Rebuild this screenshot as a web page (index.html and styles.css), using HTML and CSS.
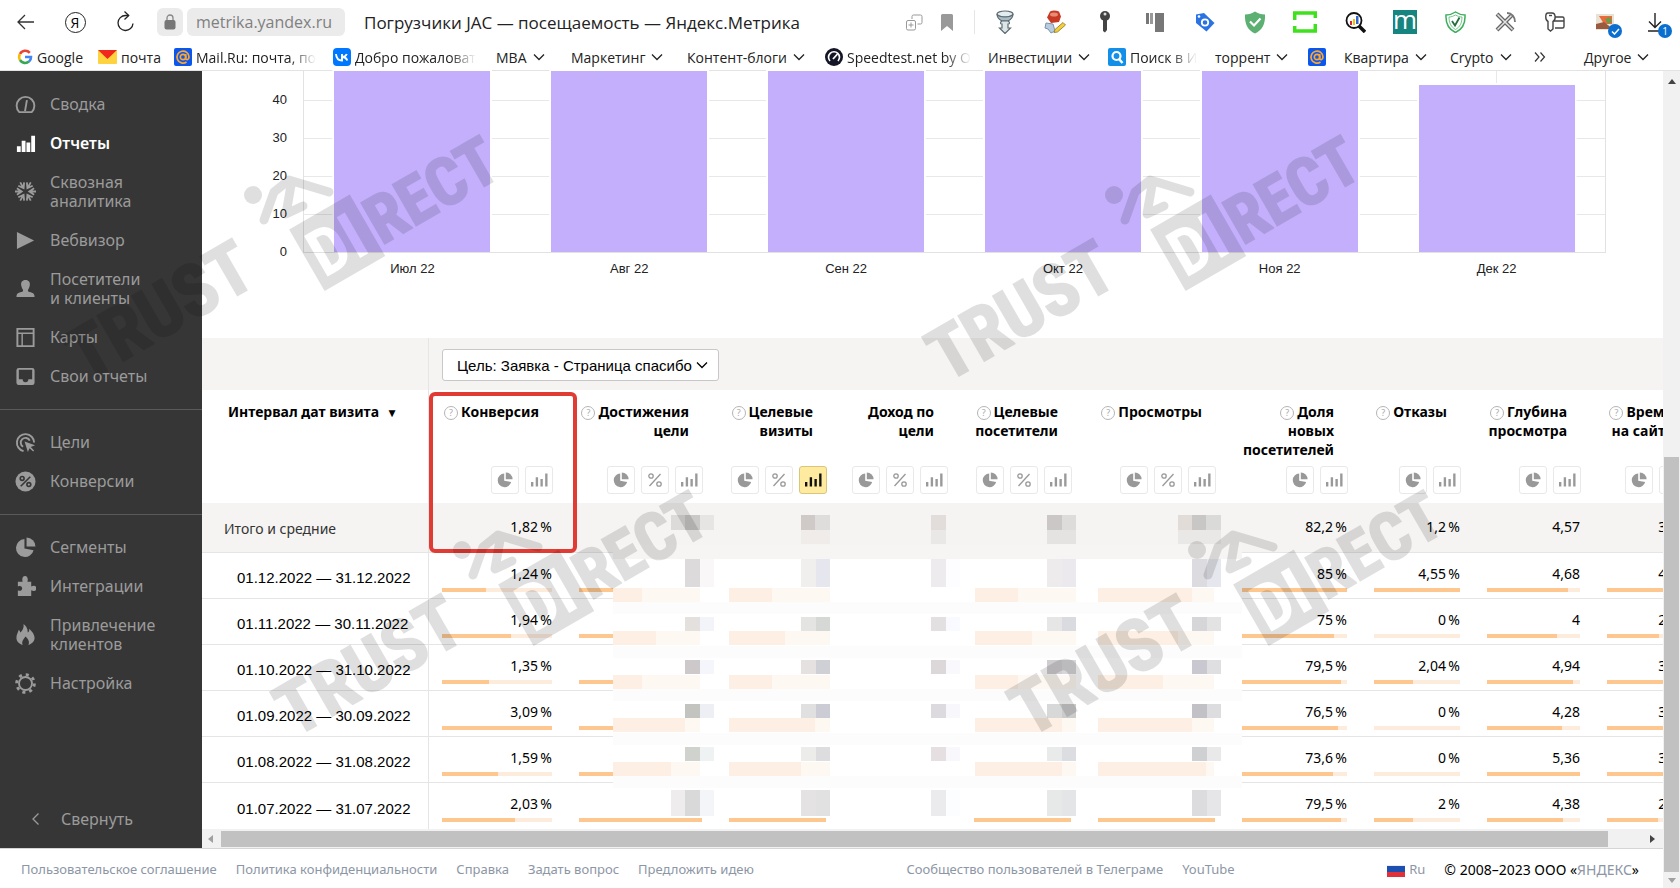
FILE: index.html
```html
<!DOCTYPE html>
<html lang="ru">
<head>
  <meta charset="UTF-8">
  <title>Погрузчики JAC — посещаемость — Яндекс.Метрика</title>
  <meta name="viewport" content="width=device-width, initial-scale=1.0">
  <link rel="stylesheet" href="styles.css">
</head>
<body>
  <!-- Shared icons -->
  <svg width="0" height="0" class="sprite" aria-hidden="true">
    <symbol id="i-chevron" viewBox="0 0 12 8"><path d="M1 1.5l5 5 5-5" fill="none" stroke="currentColor" stroke-width="1.3"/></symbol>
    <symbol id="i-pie" viewBox="0 0 20 20"><path d="M9 2a8.500 8.500 0 1 0 8.700 10.500L9 11z"/><path d="M11 0.500v8.500h8.500A8.500 8.500 0 0 0 11 .5z"/></symbol>
    <symbol id="i-bars" viewBox="0 0 18 14"><path d="M0 9h2.500v5H0zM5 4h2.500v10H5zM10 6h2.500v8H10zM15 0h2.500v14H15z"/></symbol>
    <symbol id="i-percent" viewBox="0 0 14 14"><g fill="none" stroke="currentColor" stroke-width="1.300"><circle cx="3" cy="3" r="2.200"/><circle cx="11" cy="11" r="2.200"/><path d="M12.500 1L1.500 13"/></g></symbol>
    <symbol id="i-at" viewBox="0 0 18 18"><rect width="18" height="18" rx="2" fill="#0a57f0"/><g fill="none" stroke="#ffa62b" stroke-width="1.700"><circle cx="9" cy="9" r="2.700"/><path d="M11.700 6v4c0 2.500 3.300 2 3.300-1a6 6 0 1 0-2.500 5"/></g></symbol>
  </svg>

  <header class="browser">
    <div class="toolbar">
      <button class="nav-btn" aria-label="Назад"><svg width="17" height="16" viewBox="0 0 17 16" fill="none" stroke="#333" stroke-width="1.300"><path d="M17 8H1M8 1L1 8l7 7"/></svg></button>
      <button class="nav-btn" aria-label="Яндекс"><span class="ya">Я</span></button>
      <button class="nav-btn" aria-label="Обновить"><svg width="18" height="22" viewBox="0 0 18 22" fill="none" stroke="#222" stroke-width="1.300"><path d="M12.500 4.500H9.500a7.500 7.500 0 1 0 7.500 8"/><path d="M8.500 .5l4.200 4-4.200 4"/></svg></button>
      <span class="lock"><svg width="12" height="16" viewBox="0 0 12 16"><path d="M3 7V4a3 3 0 0 1 6 0v3" fill="none" stroke="#888" stroke-width="1.300"/><rect x="0.500" y="6" width="11" height="9.500" rx="2" fill="#777"/></svg></span>
      <span class="host">metrika.yandex.ru</span>
      <span class="page-title">Погрузчики JAC — посещаемость — Яндекс.Метрика</span>
      <div class="page-actions">
        <svg width="17" height="17" viewBox="0 0 17 17" fill="none" stroke="#999"><path d="M6 5V2.500A1.500 1.500 0 0 1 7.500 1H14.500A1.500 1.500 0 0 1 16 2.500V8.500A1.500 1.500 0 0 1 14.500 10H11.500"/><rect x=".5" y="6.500" width="9" height="9.500" rx="1.500"/><path d="M5 8.500v5M2.500 11h5"/></svg>
        <svg width="12" height="17" viewBox="0 0 12 17" fill="#999"><path d="M1.500 0h9A1.500 1.500 0 0 1 12 1.500V17l-6-5-6 5V1.500A1.500 1.500 0 0 1 1.500 0z"/></svg>
      </div>
      <div class="extensions">
        <span><svg width="18" height="24" viewBox="0 0 18 24" stroke="#5d6b73" stroke-width="1.200"><ellipse cx="9" cy="4" rx="8" ry="3" fill="#e3edf0"/><path d="M1 4c0 4 3 6 5 7h6c2-1 5-3 5-7-2 4-14 4-16 0z" fill="#a9bcc4"/><path d="M6 11c-2 1-2 3 0 3v4H3.500L9 23.500 14.500 18H12v-4c2 0 2-2 0-3z" fill="#dde5e8"/></svg></span>
        <span><svg width="22" height="24" viewBox="0 0 22 24"><path d="M2 13l7 1 2 7-4 2-3-4-3-1z" fill="#b8cce0" stroke="#7c92aa"/><path d="M6 1.500c3-1.500 6-1 9 0l2 5-2 5.500-8 1-4-5.500z" fill="#c83a24"/><ellipse cx="10" cy="4.500" rx="4" ry="2" fill="#e98c75"/><path d="M10 22.500l1-3 8-7 2.500 2.500-8 7z" fill="#f3cf3c" stroke="#8b7525" stroke-width=".8"/></svg></span>
        <span><svg width="12" height="22" viewBox="0 0 12 22"><circle cx="6" cy="5" r="5" fill="#444"/><path d="M4 8h4v11l-2 2.500L4 20z" fill="#444"/><circle cx="6" cy="3" r="1.500" fill="#ddd"/></svg></span>
        <span><svg width="18" height="19" viewBox="0 0 18 19" fill="#777"><rect width="3" height="11"/><rect x="4" width="3" height="11" fill="#999"/><rect x="9" width="9" height="19"/></svg></span>
        <span><svg width="20" height="20" viewBox="0 0 20 20"><path d="M1 2.500L9 1l10.500 10-8 8.500L1 11z" fill="#2b73e3"/><circle cx="4" cy="4.500" r="1.300" fill="#fff"/><circle cx="10" cy="10.500" r="3.200" fill="none" stroke="#fff" stroke-width="1.800"/></svg></span>
        <span><svg width="22" height="23" viewBox="0 0 22 23"><path d="M11 .5c3 2 6 3 10 3C21.500 13 18 19.500 11 22.500 4 19.500.5 13 1 3.500c4 0 7-1 10-3z" fill="#5bb072"/><path d="M6 10.500l4 4 6.500-7" fill="none" stroke="#fff" stroke-width="2.200"/></svg></span>
        <span><svg width="24" height="22" viewBox="0 0 24 22" fill="none" stroke="#3fe01c" stroke-width="3.500"><path d="M1.700 9V2h20.600v5M22.300 13v7H1.700v-5"/></svg></span>
        <span><svg width="21" height="21" viewBox="0 0 21 21"><path d="M14 14l6 6" stroke="#111" stroke-width="3.500"/><circle cx="9" cy="8.500" r="7.500" fill="#fff" stroke="#111" stroke-width="1.800"/><path d="M5 9h2v4H5z" fill="#d23"/><path d="M8 7h2v6H8z" fill="#fb0"/><path d="M11 4h2.500v8H11z" fill="#36c"/></svg></span>
        <span class="ext-m">m</span>
        <span><svg width="21" height="22" viewBox="0 0 21 22" fill="none" stroke="#3eae5c"><path d="M10.500 1c3 2 6 3 9.500 3 .5 9-3 14.500-9.500 17.500C4 18.500.5 13 1 4c3.500 0 6.500-1 9.500-3z" stroke-width="1.500"/><path d="M10.500 4c2 1 4 2 6.500 2 0 6-2 10-6.500 12.500C6 16 4 12 4 6c2.500 0 4.500-1 6.500-2z" stroke-width=".7"/><path d="M7 10l3 4.500 4.500-8" stroke="#256d3c" stroke-width="1.800"/></svg></span>
        <span><svg width="21" height="20" viewBox="0 0 21 20" fill="none"><path d="M2 18L17 3M2 2l16 16" stroke="#666" stroke-width="4"/><path d="M2.500 17.500L17 3M2.500 2.500L17.500 17.500" stroke="#e4e4e4" stroke-width="1.500"/><path d="M12 1c5 0 8 4 8 9" stroke="#777" stroke-width="1.800"/></svg></span>
        <span><svg width="20" height="20" viewBox="0 0 20 20" fill="none" stroke="#444" stroke-width="1.400"><path d="M3 9.500C0 8 0 1 3 1h4c4 0 4 7 1 8.500V17l-2.500 2L3 17z"/><path d="M10 5h7.500A1.500 1.500 0 0 1 19 6.500v8A1.500 1.500 0 0 1 17.500 16H10M9 9h10"/><path d="M4 3.500h3"/></svg></span>
        <span class="badged"><svg width="18" height="16" viewBox="0 0 18 16"><rect width="18" height="16" fill="#e8e2d4"/><path d="M3 2h13v8H8z" fill="#ea6a3c"/><path d="M9 5l5-2 2 5-4 2z" fill="#6a9c4c"/><path d="M0 10l8-2 9 7H0z" fill="#9a5a40"/></svg><i class="badge"><svg width="9" height="7" viewBox="0 0 9 7"><path d="M1 3.500L3.500 6 8 1" fill="none" stroke="#fff" stroke-width="1.500"/></svg></i></span>
        <span class="badged"><svg width="17" height="19" viewBox="0 0 17 19" fill="none" stroke="#222" stroke-width="1.400"><path d="M8 0v14M2 8.500l6 6 6-6M1 18h12"/></svg><i class="badge">1</i></span>
      </div>
    </div>
    <nav class="bookmarks">
      <a href="#"><svg width="16" height="16" viewBox="0 0 16 16" fill="none" stroke-width="2.600"><path d="M12.800 3.800A6 6 0 0 0 3 5" stroke="#ea4335"/><path d="M3 5a6 6 0 0 0 0 6" stroke="#fbbc05"/><path d="M3 11a6 6 0 0 0 9 1.600" stroke="#34a853"/><path d="M12 12.600A6 6 0 0 0 14 8H8" stroke="#4285f4"/></svg><span>Google</span></a>
      <a href="#"><svg width="19" height="14" viewBox="0 0 19 14"><rect width="19" height="14" rx="1" fill="#ffd23f"/><path d="M0 0h19L9.500 9z" fill="#f0271c"/></svg><span>почта</span></a>
      <a href="#" class="long"><svg width="18" height="18"><use href="#i-at"/></svg><span>Mail.Ru: почта, по</span></a>
      <a href="#" class="long"><svg width="18" height="18" viewBox="0 0 18 18"><rect width="18" height="18" rx="4" fill="#07f"/><path d="M3 6c.3 4 2.500 6.500 6 6.500V6M9 9c2 0 4-1 4.800-3M9.500 9c2.500 0 4 1.500 4.800 3.500" fill="none" stroke="#fff" stroke-width="1.900"/></svg><span>Добро пожаловат</span></a>
      <a href="#"><span>MBA</span><svg class="chev"><use href="#i-chevron"/></svg></a>
      <a href="#"><span>Маркетинг</span><svg class="chev"><use href="#i-chevron"/></svg></a>
      <a href="#"><span>Контент-блоги</span><svg class="chev"><use href="#i-chevron"/></svg></a>
      <a href="#" class="long"><svg width="18" height="18" viewBox="0 0 18 18"><circle cx="9" cy="9" r="9" fill="#141526"/><path d="M5 13a5.500 5.500 0 1 1 8 0" fill="none" stroke="#fff" stroke-width="1.700"/><path d="M8 11l4.500-5" stroke="#fff" stroke-width="1.800"/></svg><span>Speedtest.net by O</span></a>
      <a href="#"><span>Инвестиции</span><svg class="chev"><use href="#i-chevron"/></svg></a>
      <a href="#" class="long"><svg width="18" height="18" viewBox="0 0 18 18"><rect width="18" height="18" rx="2" fill="#128fe8"/><circle cx="8.500" cy="8" r="4" fill="none" stroke="#fff" stroke-width="2.200"/><path d="M11 11l3.500 4" stroke="#fff" stroke-width="2.500"/></svg><span>Поиск в И</span></a>
      <a href="#"><span>торрент</span><svg class="chev"><use href="#i-chevron"/></svg></a>
      <a href="#" aria-label="Mail.Ru"><svg width="18" height="18"><use href="#i-at"/></svg></a>
      <a href="#"><span>Квартира</span><svg class="chev"><use href="#i-chevron"/></svg></a>
      <a href="#"><span>Crypto</span><svg class="chev"><use href="#i-chevron"/></svg></a>
      <a href="#" aria-label="Ещё"><svg width="12" height="10" viewBox="0 0 12 10" fill="none" stroke="#333" stroke-width="1.200"><path d="M1 .5L5 5 1 9.500M6.500.5l4 4.500-4 4.500"/></svg></a>
      <a href="#"><span>Другое</span><svg class="chev"><use href="#i-chevron"/></svg></a>
    </nav>
  </header>

  <div class="viewport">
    <div class="page">
      <div class="layout">
        <aside class="sidebar">
          <ul class="menu">
            <li><a href="#"><svg viewBox="0 0 22 22" fill="none" stroke="currentColor" stroke-width="2"><path d="M4.500 19a9.300 9.300 0 1 1 13 0z"/><path d="M12.500 6.500L10.500 18" stroke-width="2"/></svg>Сводка</a></li>
            <li><a href="#" class="active"><svg viewBox="0 0 22 22"><path d="M2 14h4v6H2zM7 8h4v12H7zM12 10h4v10h-4zM17 3h4v17h-4z"/></svg>Отчеты</a></li>
            <li><a href="#"><svg viewBox="0 0 22 22" fill="none" stroke="currentColor" stroke-width="1.900"><g id="ray"><path d="M0 11h7M2 7.500L7 11l-5 3.500"/></g><use href="#ray" transform="rotate(60 11 11)"/><use href="#ray" transform="rotate(120 11 11)"/><use href="#ray" transform="rotate(180 11 11)"/><use href="#ray" transform="rotate(240 11 11)"/><use href="#ray" transform="rotate(300 11 11)"/></svg>Сквозная<br>аналитика</a></li>
            <li><a href="#"><svg viewBox="0 0 22 22"><path d="M2 2l18 9-18 9z"/></svg>Вебвизор</a></li>
            <li><a href="#"><svg viewBox="0 0 22 22"><path d="M11 2c3.500 0 5 2.500 4.500 5.500-.3 2.500-1.500 4-2 5 0 2 1 2 3 2.500 3 .8 4 2 4 5H1.500c0-3 1-4.200 4-5 2-.5 3-.5 3-2.500-.5-1-1.700-2.500-2-5C6 4.500 7.500 2 11 2z"/></svg>Посетители<br>и клиенты</a></li>
            <li><a href="#"><svg viewBox="0 0 22 22" fill="none" stroke="currentColor" stroke-width="2"><path d="M2.500 2h17v18h-17z"/><path d="M3 6.500h16M7.500 7v13" stroke-width="1.500"/></svg>Карты</a></li>
            <li><a href="#"><svg viewBox="0 0 22 22" fill-rule="evenodd"><path d="M4 2h14a2.500 2.500 0 0 1 2.500 2.500v13A2.500 2.500 0 0 1 18 20H4a2.500 2.500 0 0 1-2.500-2.500v-13A2.500 2.500 0 0 1 4 2zM4 4v10h4c0 2 1 3 3 3s3-1 3-3h4V4z"/></svg>Свои отчеты</a></li>
          </ul>
          <ul class="menu">
            <li><a href="#"><svg viewBox="0 0 22 22" fill="none" stroke="currentColor" stroke-width="2"><path d="M9 20A9 9 0 1 1 20 11"/><path d="M8.500 15.500A5 5 0 1 1 15.500 9"/><path d="M10 10l11 4-4.500 1.700 3.500 3.800-1 1-3.800-3.600L13.500 21z" fill="currentColor" stroke="none"/></svg>Цели</a></li>
            <li><a href="#"><svg viewBox="0 0 22 22"><circle cx="11" cy="11" r="10.500"/><g fill="none" stroke="#363636" stroke-width="1.700"><circle cx="7.500" cy="7.800" r="2"/><circle cx="14.500" cy="14.200" r="2"/><path d="M16 6L6 16"/></g></svg>Конверсии</a></li>
          </ul>
          <ul class="menu">
            <li><a href="#"><svg viewBox="0 0 20 20"><use href="#i-pie"/></svg>Сегменты</a></li>
            <li><a href="#"><svg viewBox="0 0 22 22"><path d="M3 6h5C7 3 8 0 10.500 0S14 3 13 6h4v5c3-1.500 5.500-.5 5.500 2s-2.500 3.500-5.500 2v6H3v-6c3 1.500 4.500-.5 4.500-2S6 9.500 3 11z"/></svg>Интеграции</a></li>
            <li><a href="#"><svg viewBox="0 0 22 22"><path d="M9 0c5 4 4 8 4.500 9C15 8 15 6 15 5c3 3 5.500 6 5.500 9.500C20.500 18 18 21 14 22c2-4-1-7-3-9-2 3-4.500 5-3 9-4-1-6.500-4-6.500-7.500C1.500 11 3 9 4 6c1 1 1.500 2 1.500 3C8 7 9.500 4 9 0z"/></svg>Привлечение<br>клиентов</a></li>
            <li><a href="#"><svg viewBox="0 0 22 22" fill="none" stroke="currentColor"><circle cx="11" cy="11" r="6.800" stroke-width="2"/><circle cx="11" cy="11" r="9.300" stroke-width="3" stroke-dasharray="3.200 4.104"/></svg>Настройка</a></li>
          </ul>
          <button class="collapse"><svg width="7" height="12" viewBox="0 0 7 12" fill="none" stroke="currentColor" stroke-width="1.300"><path d="M6.500.5L1 6l5.500 5.500"/></svg>Свернуть</button>
        </aside>

        <main class="report">
          <section class="chart">
            <div class="y-axis"><span>40</span><span>30</span><span>20</span><span>10</span><span>0</span></div>
            <div class="plot" id="plot"></div>
          </section>

          <section class="data">
            <div class="goal-row">
              <label class="goal">
                <select aria-label="Цель"><option>Цель: Заявка - Страница спасибо</option></select>
                <svg class="chev"><use href="#i-chevron"/></svg>
              </label>
            </div>
            <div class="table-wrap">
              <table>
                <colgroup><col class="c-date"><col class="c-conv"><col class="c-reach"><col class="c-visits"><col class="c-income"><col class="c-users"><col class="c-views"><col class="c-new"><col class="c-bounce"><col class="c-depth"><col class="c-time"></colgroup>
                <thead><tr id="head"></tr></thead>
                <tbody id="rows"></tbody>
              </table>
              <!-- hidden figures -->
              <svg class="mosaic" id="mosaic" width="630" height="330" viewBox="613 503 630 330" aria-hidden="true" shape-rendering="crispEdges"></svg>
              <div class="highlight"></div>
            </div>
            <div class="hscroll"><i class="arrow left"></i><div class="thumb"></div><i class="arrow right"></i></div>
          </section>
        </main>
      </div>

      <footer class="footer">
        <div class="links">
          <a href="#">Пользовательское соглашение</a>
          <a href="#">Политика конфиденциальности</a>
          <a href="#">Справка</a>
          <a href="#">Задать вопрос</a>
          <a href="#">Предложить идею</a>
        </div>
        <div class="links">
          <a href="#">Сообщество пользователей в Телеграме</a>
          <a href="#">YouTube</a>
        </div>
        <div class="links">
          <a href="#" class="lang"><i class="flag"></i>Ru</a>
          <span class="copyright">© 2008–2023 ООО «<a href="#">ЯНДЕКС</a>»</span>
        </div>
      </footer>
    </div>
    <div class="vscroll"><i class="arrow up"></i><div class="thumb"></div><i class="arrow down"></i></div>
  </div>

  <!-- Watermark -->
  <svg class="watermark" width="1680" height="888" viewBox="0 0 1680 888" aria-hidden="true">
    <defs>
      <mask id="box-cut"><rect x="0" y="40" width="100" height="90" fill="#fff"/><text x="20" y="108">DI</text></mask>
      <g id="mark">
        <circle r="9"/>
        <path d="M11 25L21-3 36-15 76-3M38-10L33 19 50 11" fill="none" stroke="#000" stroke-width="9" stroke-linecap="round" stroke-linejoin="round"/>
        <g transform="rotate(-30)">
          <rect x="14" y="48" width="70" height="71" mask="url(#box-cut)"/>
          <text x="-239" y="79" class="trust">TRUST</text>
          <text x="86" y="108" class="direct">RECT</text>
        </g>
      </g>
    </defs>
    <use href="#mark" x="253" y="195"/>
    <use href="#mark" x="1114" y="195"/>
    <use href="#mark" x="462" y="550"/>
    <use href="#mark" x="1197" y="550"/>
  </svg>

  <script src="script.js"></script>
</body>
</html>
```
FILE: styles.css
```css
* {
  box-sizing: border-box;
}
body {
  margin: 0;
  height: 100vh;
  display: flex;
  flex-direction: column;
  overflow: hidden;
  background: #fff;
  color: #000;
  font-family: "Noto Sans", "Open Sans", sans-serif;
  font-size: 14px;
}
a {
  color: inherit;
  text-decoration: none;
}
button {
  font: inherit;
  border: none;
  background: none;
  padding: 0;
  cursor: pointer;
}
.sprite {
  position: absolute;
}
.chev {
  width: 12px;
  height: 8px;
  flex: none;
}

/* Browser bar */
.browser {
  flex: none;
  border-bottom: 1px solid #e3e3e3;
  color: #222;
  font-family: "Open Sans", "Noto Sans", sans-serif;
}
.toolbar {
  display: flex;
  align-items: center;
  height: 44px;
}
.nav-btn {
  width: 50px;
  height: 28px;
  display: flex;
  align-items: center;
  justify-content: center;
}
.ya {
  width: 21px;
  height: 21px;
  border: 1px solid #222;
  border-radius: 50%;
  font-size: 14px;
  line-height: 19px;
}
.lock,
.host {
  height: 28px;
  display: flex;
  align-items: center;
  border-radius: 6px;
  background: #ebebeb;
}
.lock {
  width: 26px;
  margin: 0 4px 0 7px;
  justify-content: center;
}
.host {
  padding: 0 13px 0 9px;
  color: #808080;
  font-size: 16px;
}
.page-title {
  margin-left: 19px;
  font-size: 17px;
  white-space: nowrap;
}
.page-actions {
  display: flex;
  align-items: center;
  gap: 18px;
  height: 24px;
  margin-left: auto;
  padding-right: 21px;
  border-right: 1px solid #e6e6e6;
}
.extensions {
  display: flex;
  flex: none;
  width: 700px;
  margin-left: 5px;
}
.extensions > span {
  flex: 1;
  display: flex;
  justify-content: center;
  align-items: center;
  height: 24px;
}
.extensions .ext-m {
  flex: none;
  width: 24px;
  margin: 0 13px;
  padding-bottom: 6px;
  background: #16847f;
  color: #fff;
  font-size: 26px;
  line-height: 20px;
}
.badged {
  position: relative;
}
.badge {
  position: absolute;
  left: 28px;
  top: 14px;
  width: 14px;
  height: 14px;
  display: flex;
  align-items: center;
  justify-content: center;
  border-radius: 50%;
  background: #0b6fd0;
  color: #fff;
  font-size: 10px;
  font-style: normal;
}
.bookmarks {
  display: grid;
  grid-template-columns: 81px 76px 159px 163px 75px 116px 138px 163px 120px 107px 93px 36px 106px 84px 50px 1fr;
  align-items: center;
  height: 26px;
  padding-left: 17px;
}
.bookmarks a {
  display: flex;
  align-items: center;
  gap: 4px;
  min-width: 0;
  white-space: nowrap;
}
.bookmarks .chev {
  margin-left: 2px;
}
.bookmarks .long svg {
  flex: none;
}
.bookmarks .long span {
  -webkit-mask-image: linear-gradient(to left, transparent, #000 26px);
  mask-image: linear-gradient(to left, transparent, #000 26px);
}

/* Page */
.viewport {
  flex: 1;
  display: flex;
  min-height: 0;
}
.page {
  flex: 1;
  min-width: 0;
  display: flex;
  flex-direction: column;
}
.layout {
  flex: 1;
  display: flex;
  min-height: 0;
}
.sidebar {
  flex: none;
  width: 202px;
  display: flex;
  flex-direction: column;
  padding-top: 1px;
  background: #363636;
  color: #9b9b9b;
  font-size: 16px;
}
.menu {
  display: flex;
  flex-direction: column;
  gap: 20px;
  margin: 0;
  padding: 23px 0;
  list-style: none;
  line-height: 19px;
}
.menu + .menu {
  border-top: 1px solid #5a5a5a;
}
.menu a {
  display: block;
  position: relative;
  padding-left: 50px;
}
.menu svg {
  position: absolute;
  left: 15px;
  top: 50%;
  width: 21px;
  height: 21px;
  margin-top: -11px;
  fill: currentColor;
}
.menu svg[fill="none"] {
  fill: none;
}
.menu .active {
  color: #fff;
  font-weight: 600;
}
.collapse {
  display: flex;
  align-items: center;
  gap: 22px;
  margin: auto 0 18px 32px;
  color: inherit;
}

.report {
  flex: 1;
  min-width: 0;
  display: flex;
  flex-direction: column;
}

/* Chart */
.chart {
  display: flex;
  height: 267px;
  padding-right: 57px;
  font: 13px/16px "Liberation Sans", Arial, sans-serif;
  color: #222;
}
.y-axis {
  width: 85px;
  padding-top: 21px;
  text-align: right;
}
.y-axis span {
  display: block;
  height: 38px;
}
.plot {
  flex: 1;
  display: flex;
  height: 182px;
  margin-left: 16px;
  border: solid #e2e2e2;
  border-width: 0 1px 1px;
  background: repeating-linear-gradient(to top, transparent 0 37px, #e8e8e8 37px 38px);
}
.month {
  flex: 1;
  display: flex;
  flex-direction: column;
  align-items: center;
  justify-content: flex-end;
  height: 206px;
  background: linear-gradient(#e8e8e8, #e8e8e8) center top / 1px 181px no-repeat;
}
.month .bar {
  width: 72%;
  max-height: 181px;
  background: #c3affc;
  outline: 2px solid #fff;
  clip-path: inset(-2px -2px 0);
}
.month span {
  padding-top: 9px;
}

/* Table */
.goal-row {
  display: flex;
  align-items: center;
  height: 52px;
  padding: 2px 0 0 240px;
  background: linear-gradient(#e6e5e3, #e6e5e3) 226px 0 / 1px 100% no-repeat #f5f4f2;
}
.goal {
  position: relative;
}
.goal select {
  appearance: none;
  width: 277px;
  height: 32px;
  padding: 0 14px;
  border: 1px solid #c8c8c8;
  border-radius: 3px;
  background: #fff;
  color: #000;
  font: 15px "Liberation Sans", Arial, sans-serif;
}
.goal .chev {
  position: absolute;
  right: 11px;
  top: 12px;
}
.table-wrap {
  position: relative;
  overflow: hidden;
}
table {
  width: 1498px;
  table-layout: fixed;
  border-collapse: separate;
  border-spacing: 0;
}
.c-date { width: 227px; }
.c-conv { width: 137px; }
.c-reach { width: 150px; }
.c-visits { width: 124px; }
.c-income { width: 121px; }
.c-users { width: 124px; }
.c-views { width: 144px; }
.c-new { width: 132px; }
.c-bounce { width: 113px; }
.c-depth { width: 120px; }
.c-time { width: 106px; }
th,
td {
  padding: 0 14px 0 13px;
  text-align: right;
  white-space: nowrap;
}
th {
  height: 113px;
  padding-right: 13px;
  line-height: 19px;
  vertical-align: top;
}
.head {
  display: flex;
  flex-direction: column;
  justify-content: space-between;
  align-items: flex-end;
  height: 113px;
  padding: 12px 0 9px;
}
.head .name {
  padding-right: 14px;
}
.help {
  display: inline-block;
  width: 14px;
  height: 14px;
  margin-right: 3px;
  border: 1px solid #b5b5b5;
  border-radius: 50%;
  color: #aaa;
  font-size: 9px;
  font-weight: 400;
  line-height: 12px;
  text-align: center;
  vertical-align: 1px;
}
.tools {
  display: flex;
  gap: 6px;
}
.tools button {
  width: 28px;
  height: 28px;
  display: flex;
  align-items: center;
  justify-content: center;
  border: 1px solid #e9e9e9;
  border-radius: 3px;
  color: #999;
}
.tools button.on {
  background: #ffeba0;
  border-color: #d9c67c;
  color: #111;
}
.tools svg {
  width: 16px;
  height: 16px;
  fill: currentColor;
}
.tools .t-bars svg {
  height: 14px;
  width: 17px;
}
.tools .t-percent svg {
  fill: none;
  width: 14px;
}
th:first-child,
td:first-child {
  padding-left: 35px;
  border-right: 1px solid #e5e5e5;
  text-align: left;
}
th:first-child {
  padding: 12px 0 0 26px;
}
td {
  height: 46px;
  border-bottom: 1px solid #e5e5e5;
}
tr:last-child td {
  border-bottom: none;
}
td:first-child {
  padding-top: 4px;
  font-family: "Liberation Sans", Arial, sans-serif;
  font-size: 15px;
}
.total td {
  height: 50px;
  padding-bottom: 2px;
  background: #f5f4f2;
}
.total td:first-child {
  padding: 2px 0 0 22px;
  color: #333;
  font-family: inherit;
  font-size: 14px;
}
.value {
  display: block;
  height: 30px;
  padding-top: 8px;
  line-height: 19px;
}
.meter {
  display: block;
  height: 4px;
  margin: 2px 0 4px;
  background: #fdebdc;
}
.meter i {
  display: block;
  height: 4px;
  background: #fdc78f;
}
.mosaic {
  position: absolute;
  left: 411px;
  top: 113px;
}
.highlight {
  position: absolute;
  left: 227px;
  top: 2px;
  width: 148px;
  height: 161px;
  border: 4px solid #e13c34;
  border-radius: 6px;
}

/* Scrollbars */
.hscroll,
.vscroll {
  display: flex;
  align-items: center;
  background: #f1f1f1;
}
.hscroll {
  height: 19px;
}
.hscroll .thumb {
  flex: 1;
  height: 16px;
  margin: 0 42px 0 8px;
  background: #c1c1c1;
}
.vscroll {
  flex: none;
  width: 17px;
  flex-direction: column;
}
.vscroll .thumb {
  flex: 1;
  width: 15px;
  margin: 373px 0 6px;
  background: #c1c1c1;
}
.arrow {
  border: 4px solid transparent;
}
.arrow.left {
  margin-left: 6px;
  border-right: 5px solid #a0a0a0;
  border-left-width: 0;
}
.arrow.right {
  margin-right: 8px;
  border-left: 5px solid #444;
  border-right-width: 0;
}
.arrow.up {
  margin-top: 8px;
  border-bottom: 5px solid #444;
  border-top-width: 0;
}
.arrow.down {
  margin-bottom: 5px;
  border-top: 5px solid #a0a0a0;
  border-bottom-width: 0;
}

/* Footer */
.footer {
  flex: none;
  display: flex;
  align-items: center;
  justify-content: space-between;
  height: 40px;
  padding: 1px 24px 0 21px;
  border-top: 1px solid #d5d5d5;
  font-size: 13px;
  white-space: nowrap;
}
.links {
  display: flex;
  align-items: center;
  gap: 19px;
}
.footer a {
  color: #8c96a5;
}
.copyright {
  font-size: 14px;
}
.lang {
  display: flex;
  align-items: center;
  gap: 4px;
}
.flag {
  width: 18px;
  height: 12px;
  margin-top: 4px;
  background: linear-gradient(#eee 0 1px, #1c4fb0 1px 7px, #e0303a 7px);
}

.watermark {
  position: absolute;
  left: 0;
  top: 0;
  opacity: 0.12;
  pointer-events: none;
}
.watermark text {
  font-family: "Roboto Condensed", Roboto, "Liberation Sans", sans-serif;
  font-weight: 700;
  font-size: 66px;
}
.watermark .trust,
.watermark .direct {
  stroke: #000;
  stroke-width: 2px;
}
.watermark .trust {
  font-size: 73px;
}
```
FILE: script.js
```js
// Chart
const months = [['Июл 22', 181], ['Авг 22', 181], ['Сен 22', 181], ['Окт 22', 181], ['Ноя 22', 181], ['Дек 22', 167]];
document.getElementById('plot').innerHTML = months.map(([name, h]) =>
  `<div class="month"><div class="bar" style="height:${h}px"></div><span>${name}</span></div>`).join('');

// Table header: name, has help mark, buttons, active button
const columns = [
  ['Конверсия', 1, 'pie bars'],
  ['Достижения<br>цели', 1, 'pie percent bars'],
  ['Целевые<br>визиты', 1, 'pie percent bars', 'bars'],
  ['Доход по<br>цели', 0, 'pie percent bars'],
  ['Целевые<br>посетители', 1, 'pie percent bars'],
  ['Просмотры', 1, 'pie percent bars'],
  ['Доля<br>новых<br>посетителей', 1, 'pie bars'],
  ['Отказы', 1, 'pie bars'],
  ['Глубина<br>просмотра', 1, 'pie bars'],
  ['Время<br>на сайте', 1, 'pie bars'],
];
const titles = { pie: 'Круговая диаграмма', percent: 'Проценты', bars: 'Столбцы' };

document.getElementById('head').innerHTML = '<th>Интервал дат визита&nbsp; <small>▼</small></th>' +
  columns.map(([name, help, tools, on]) => `<th><div class="head">
    <div class="name">${help ? '<span class="help">?</span>' : ''}${name}</div>
    <div class="tools">${tools.split(' ').map(t =>
      `<button class="t-${t}${t === on ? ' on' : ''}" aria-label="${titles[t]}"><svg><use href="#i-${t}"/></svg></button>`).join('')}</div>
  </div></th>`).join('');

// Rows: [value, meter %], null for an empty cell
const hid = ['', 100];
const rows = [
  ['01.12.2022 — 31.12.2022', ['1,24 %', 40], hid, hid, null, hid, hid, ['85 %', 100], ['4,55 %', 100], ['4,68', 87], ['4:00', 100]],
  ['01.11.2022 — 30.11.2022', ['1,94 %', 63], hid, hid, null, hid, hid, ['75 %', 88], ['0 %', 0], ['4', 75], ['2:00', 66]],
  ['01.10.2022 — 31.10.2022', ['1,35 %', 43], hid, hid, null, hid, hid, ['79,5 %', 94], ['2,04 %', 45], ['4,94', 92], ['3:00', 80]],
  ['01.09.2022 — 30.09.2022', ['3,09 %', 100], hid, hid, null, hid, hid, ['76,5 %', 91], ['0 %', 0], ['4,28', 81], ['3:00', 80]],
  ['01.08.2022 — 31.08.2022', ['1,59 %', 51], hid, hid, null, hid, hid, ['73,6 %', 87], ['0 %', 0], ['5,36', 100], ['3:00', 80]],
  ['01.07.2022 — 31.07.2022', ['2,03 %', 66], hid, hid, null, hid, hid, ['79,5 %', 94], ['2 %', 45], ['4,38', 82], ['2:00', 65]],
];
const total = ['1,82 %', '', '', '', '', '', '82,2 %', '1,2 %', '4,57', '3:00'];
// thin space before the percent sign
const fmt = v => v.replace(' %', '&thinsp;%');

document.getElementById('rows').innerHTML =
  '<tr class="total"><td>Итого и средние</td>' + total.map(v => `<td>${fmt(v)}</td>`).join('') + '</tr>' +
  rows.map(([date, ...cells]) => `<tr><td>${date}</td>` + cells.map(c => c
    ? `<td><span class="value">${fmt(c[0])}</span><span class="meter"><i style="width:${c[1]}%"></i></span></td>`
    : '<td></td>').join('') + '</tr>').join('');

// Mosaic: [x, y, width, height, colour]
const blocks = [
  [613, 545, 629, 14, '#f6f5f3'], [613, 559, 629, 228, '#fff'],
  [671, 515, 14, 15, '#dddbd9'], [685, 515, 15, 15, '#cbc9c7'], [700, 515, 14, 15, '#e6e5e3'],
  [801, 515, 14, 15, '#cfcac8'], [815, 515, 15, 15, '#dfdddb'], [801, 530, 29, 14, '#efecea'],
  [931, 515, 15, 15, '#e2dcda'], [931, 530, 15, 14, '#eae8e6'],
  [1047, 515, 15, 15, '#cbc7c6'], [1062, 515, 14, 15, '#dedcda'], [1047, 530, 29, 14, '#e5e3e1'],
  [1178, 515, 14, 15, '#e2dcd8'], [1192, 515, 14, 15, '#c9c7c6'], [1206, 515, 15, 15, '#dadad9'], [1178, 530, 43, 14, '#eae8e6'],
];
// soft lines left where the row borders were
[602, 646, 689, 733, 776].forEach(y => blocks.push([613, y, 629, 12, '#fcfcfc']));
const xs = { a: 685, b: 801, c: 931, d: 1047, e: 1192 };
const dark = [
  { y: 559, h: 28, a: ['#dcdada', '#f9f7f7'], b: ['#f1eeee', '#e6e6ee'], c: ['#eeebee', '#fdfdff'], d: ['#eeebed', '#ece9ee'], e: ['#dcdbe0', '#e6e6ee'] },
  { y: 617, h: 14, a: ['#e3e0dd', '#f2f4f9'], b: ['#e4e4e2', '#d6d8d6'], c: ['#e3e0e2', '#f9faff'], d: ['#e6e6e6', '#d9dbe0'], e: ['#d6d6d8', '#e3e3e4'] },
  { y: 660, h: 14, a: ['#cdc9ca', '#f5f6fb'], b: ['#e6e1e1', '#cfd0d6'], c: ['#dcd8da', '#f9f9fd'], d: ['#d0cdd0', '#d6d6da'], e: ['#c9c8d0', '#dfdfe2'] },
  { y: 704, h: 14, a: ['#c3c4bf', '#eeeff4'], b: ['#e1e0e0', '#cbccd4'], c: ['#dddadf', '#f8f8fc'], d: ['#d7d8d8', '#cbcbcc'], e: ['#c2c2c6', '#dddde0'] },
  { y: 747, h: 14, a: ['#cfd2cd', '#eff2f2'], b: ['#ececea', '#dddde0'], c: ['#e5dfe1', '#f8f8fc'], d: ['#e9ebeb', '#dbdde0'], e: ['#ced0d1', '#e9e9ea'] },
  { y: 790, h: 26, a: ['#dad9d9', '#f4f5f9'], b: ['#e4e2e3', '#e2e1e2'], c: ['#ebeaec', '#fcfdff'], d: ['#e7e8e8', '#e4e5e6'], e: ['#dcdcdf', '#e6e6e8'] },
];
dark.forEach(r => Object.keys(xs).forEach(k => blocks.push([xs[k], r.y, 15, r.h, r[k][0]], [xs[k] + 15, r.y, 14, r.h, r[k][1]])));
blocks.push([671, 790, 14, 26, '#eeeced']);
// blurred meters, right ends per row
[[588, 642, 772, 1018, 1192], [631, 656, 785, 1032, 1178], [675, 642, 772, 1018, 1163], [718, 685, 815, 1062, 1192], [762, 671, 801, 1062, 1206]]
  .forEach(([y, ...ends]) => [[613, 700], [729, 830], [975, 1076], [1098, 1214]].forEach(([x, end], i) =>
    blocks.push([x, y, end - x, 14, '#fef8f2'], [x, y, ends[i] - x, 14, '#fdefe3'])));

document.getElementById('mosaic').innerHTML = blocks.map(([x, y, w, h, c]) =>
  `<rect x="${x}" y="${y}" width="${w}" height="${h}" fill="${c}"/>`).join('');
```
